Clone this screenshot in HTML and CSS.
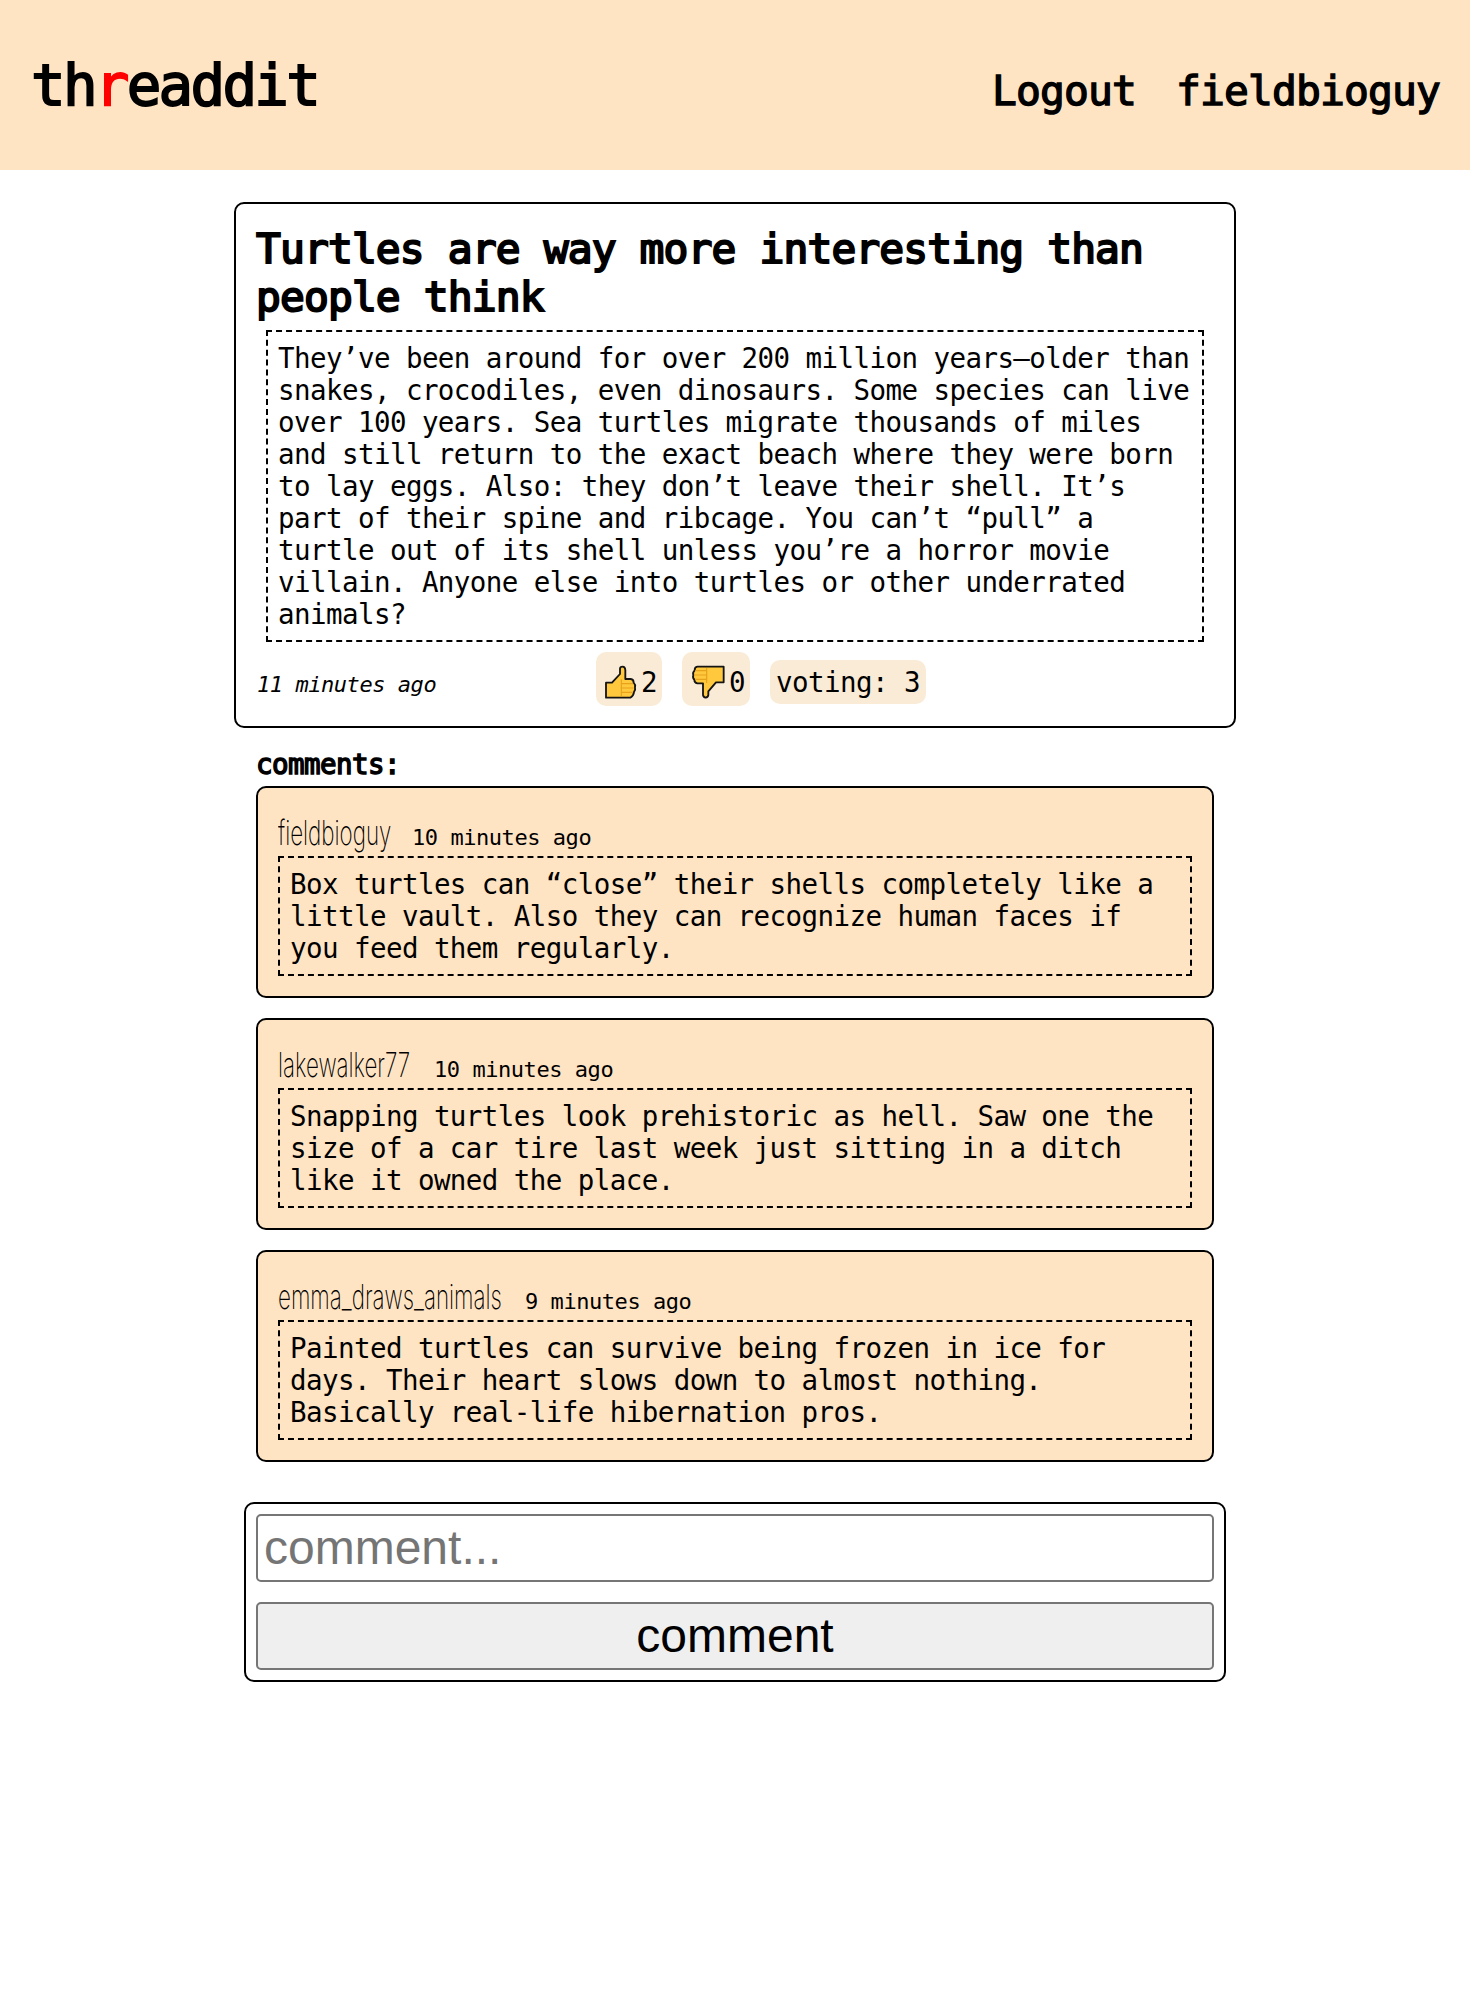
FILE: index.html
```html
<!DOCTYPE html>
<html lang="en">
<head>
<meta charset="utf-8">
<title>threaddit</title>
<link rel="stylesheet" href="styles.css">
</head>
<body>
<header class="site-header">
  <a class="logo">th<span class="logo-accent">r</span>eaddit</a>
  <nav class="nav"><a>Logout</a><a>fieldbioguy</a></nav>
</header>
<main class="page">
  <article class="post">
    <h1 class="post-title">Turtles are way more interesting than people think</h1>
    <p class="post-body">They’ve been around for over 200 million years—older than snakes, crocodiles, even dinosaurs. Some species can live over 100 years. Sea turtles migrate thousands of miles and still return to the exact beach where they were born to lay eggs. Also: they don’t leave their shell. It’s part of their spine and ribcage. You can’t “pull” a turtle out of its shell unless you’re a horror movie villain. Anyone else into turtles or other underrated animals?</p>
    <footer class="post-footer">
      <time class="post-time">11 minutes ago</time>
      <div class="votes">
        <span class="vote vote-up">
          <svg class="thumb" viewBox="0 0 114 114">
            <path class="hand" d="M12 56H30L54 30V14Q54 8 62 8Q69 8 70 18V45H86Q95 46 95 56Q101 62 99 70Q101 77 96 84Q95 95 85 101H12Z"/>
            <path class="fingers" d="M58 46V97M58 59H93M58 72H95M58 85H92"/>
          </svg>2</span>
        <span class="vote vote-down">
          <svg class="thumb" viewBox="0 0 114 114">
            <path class="hand" d="M104 8H25Q17 9 17 19Q10 26 13 33Q10 41 16 47Q16 56 25 58H42V93Q43 100 50 101Q57 100 58 93V82L81 55H104Z"/>
            <path class="fingers" d="M53 12V57M19 20H53M15 33H53M18 46H53"/>
          </svg>0</span>
        <span class="vote-total">voting: 3</span>
      </div>
    </footer>
  </article>
  <section class="comments">
    <h2 class="comments-title">comments:</h2>
    <article class="comment">
      <div class="comment-head"><span class="author author-a"><span>fieldbioguy</span></span><time>10 minutes ago</time></div>
      <p class="comment-body">Box turtles can “close” their shells completely like a little vault. Also they can recognize human faces if you feed them regularly.</p>
    </article>
    <article class="comment">
      <div class="comment-head"><span class="author author-b"><span>lakewalker77</span></span><time>10 minutes ago</time></div>
      <p class="comment-body">Snapping turtles look prehistoric as hell. Saw one the size of a car tire last week just sitting in a ditch like it owned the place.</p>
    </article>
    <article class="comment">
      <div class="comment-head"><span class="author author-c"><span>emma_draws_animals</span></span><time>9 minutes ago</time></div>
      <p class="comment-body">Painted turtles can survive being frozen in ice for days. Their heart slows down to almost nothing. Basically real-life hibernation pros.</p>
    </article>
  </section>
  <form class="comment-form">
    <input class="field" type="text" placeholder="comment...">
    <button class="submit" type="button">comment</button>
  </form>
</main>
</body>
</html>
```
FILE: styles.css
```css
* { box-sizing: border-box; }
body {
  margin: 0;
  background: #fff;
  color: #000;
  font: 27.5px/32px "DejaVu Sans Mono", monospace;
  letter-spacing: -0.57px;
}
h1, h2, p { margin: 0; }
.site-header {
  height: 170px;
  padding: 0 30px 0 31px;
  background: bisque;
  display: flex;
  justify-content: space-between;
  align-items: baseline;
}
.logo {
  font-size: 57.5px;
  letter-spacing: -2.72px;
  line-height: 64px;
  padding-top: 54px;
  -webkit-text-stroke: 1.8px currentColor;
}
.logo-accent { color: red; }
.nav {
  display: flex;
  gap: 40px;
  font-size: 41.25px;
  letter-spacing: -0.835px;
  -webkit-text-stroke: 1.4px currentColor;
}
.page { width: 1002px; margin: 32px auto 0; }
.post { border: 2px solid #000; border-radius: 10px; padding: 20px; height: 526px; }
.post-title {
  font-size: 41.25px;
  letter-spacing: -0.86px;
  line-height: 48px;
  font-weight: 400;
  padding-top: 1px;
  margin-bottom: -1px;
  -webkit-text-stroke: 2px currentColor;
}
.post-body { margin: 10px; padding: 10px; border: 2px dashed #000; }
.post-footer { display: flex; }
.post-time {
  width: 340px;
  padding: 17px 0 0 1px;
  font-size: 22px;
  letter-spacing: -0.445px;
  font-style: italic;
}
.votes { display: flex; align-items: flex-start; gap: 20px; }
.vote {
  display: flex;
  height: 54px;
  padding: 14px 5px 8px 8px;
  justify-content: space-between;
  border-radius: 10px;
  background: antiquewhite;
}
.vote-up { width: 66px; }
.vote-down { width: 68px; }
.thumb { width: 38px; height: 38px; margin: -2px -3px 0 -2px; flex: none; }
.vote-down .thumb { margin-left: -1px; }
.hand { fill: #ffc83d; stroke: #141414; stroke-width: 5.5; stroke-linejoin: round; }
.fingers { fill: none; stroke: #e8a21c; stroke-width: 3.5; }
.vote-total { margin-top: 8px; padding: 6px; border-radius: 10px; background: antiquewhite; }
.comments { padding: 20px 22px 0; }
.comments-title {
  font-size: 27.5px;
  font-weight: 400;
  margin-bottom: 6px;
  -webkit-text-stroke: 1.4px currentColor;
}
.comment {
  border: 2px solid #000;
  border-radius: 10px;
  padding: 20px;
  margin-bottom: 20px;
  background: bisque;
}
.comment-head {
  display: flex;
  gap: 21px;
  height: 48px;
  align-items: baseline;
  font-size: 22px;
  letter-spacing: -0.445px;
}
.author {
  font: 250 34px/50px Inter, sans-serif;
  letter-spacing: 0;
  white-space: nowrap;
}
.author span { display: inline-block; transform-origin: 0 50%; transform: scaleX(.658); }
.author-a { width: 113px; }
.author-b { width: 135px; }
.author-c { width: 226px; }
.comment-body { padding: 10px; border: 2px dashed #000; }
.comment-form {
  display: flex;
  flex-direction: column;
  gap: 20px;
  width: 982px;
  margin: 40px auto 0;
  padding: 10px;
  border: 2px solid #000;
  border-radius: 10px;
}
.field, .submit {
  height: 68px;
  border: 2px solid #767676;
  border-radius: 5px;
  font: 48px "Liberation Sans", Arial, sans-serif;
  color: #000;
}
.field { padding: 1px 6px 3px; }
.field::placeholder { color: #757575; }
.submit { background: #efefef; padding: 0 12px 2px; }
```
